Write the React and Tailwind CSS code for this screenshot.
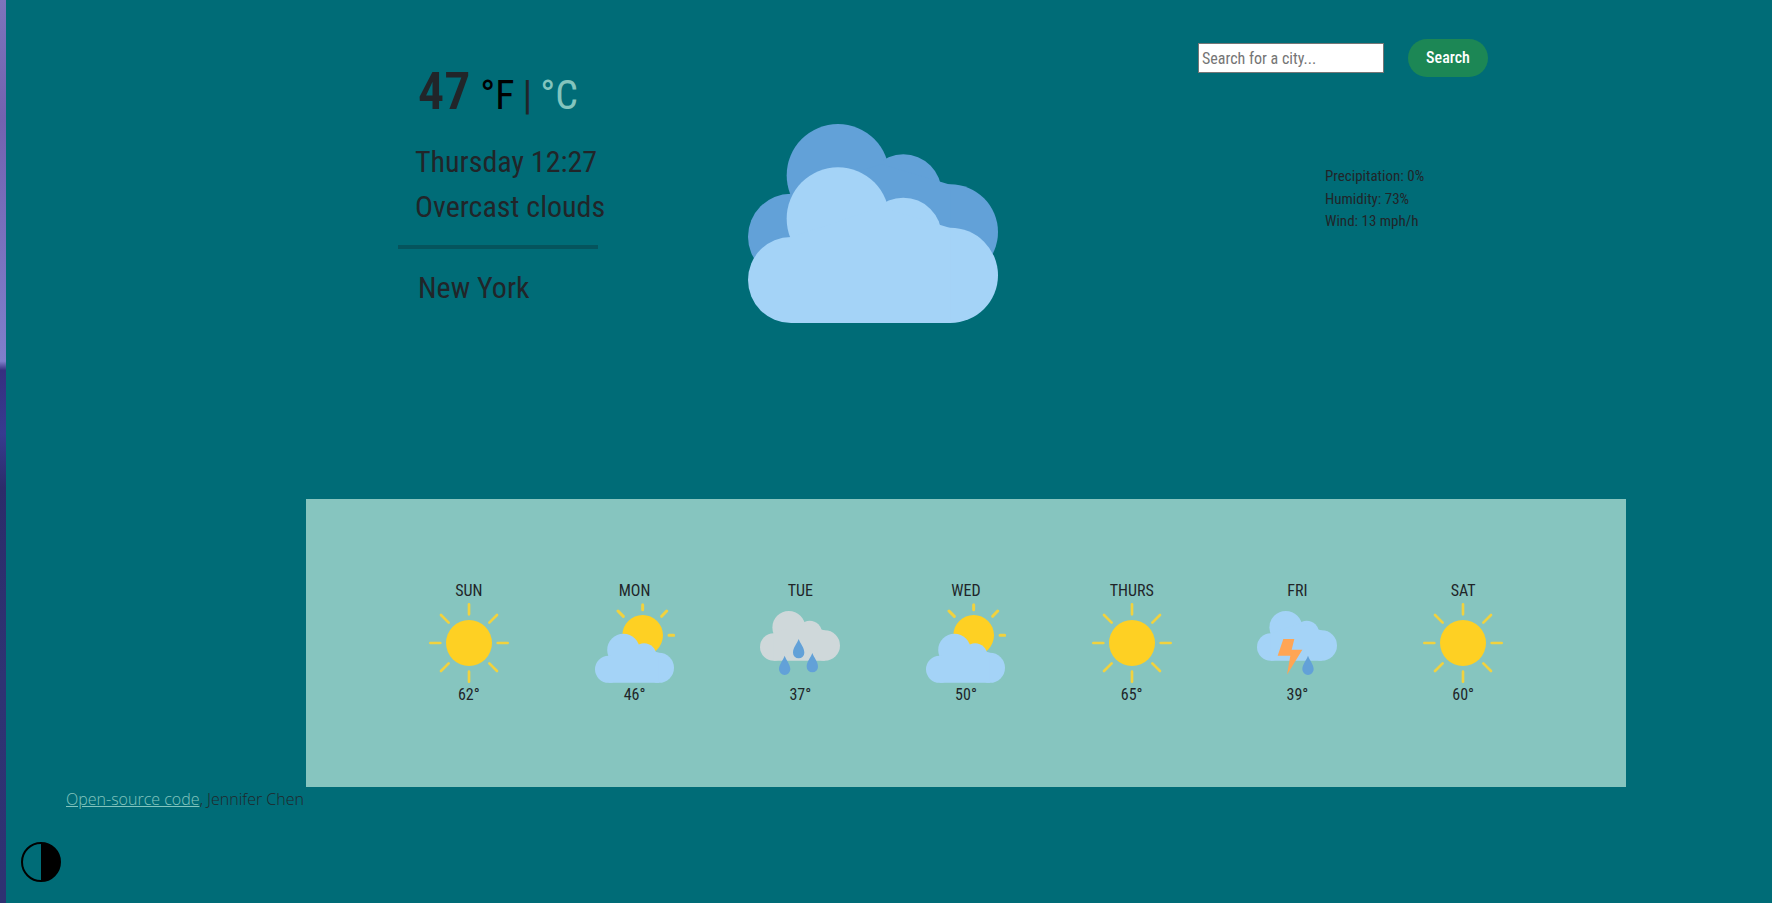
const CLOUD = (
  <>
    <circle cx="129" cy="338" r="129" />
    <circle cx="270" cy="154" r="154" />
    <circle cx="466" cy="206" r="115" />
    <circle cx="607" cy="324" r="143" />
    <path d="M129 467V209L400 120L607 182V467Z" />
  </>
);

const RAIN_DROP = "M0 0C5 14 17 26 17 41A17 17 0 0 1 -17 41C-17 26 -5 14 0 0Z";

function Overcast() {
  return (
    <svg viewBox="0 0 750 597" className="w-[250px]" role="img" aria-label="Overcast clouds">
      <g fill="#62a1d8">{CLOUD}</g>
      <g fill="#a4d3f7" transform="translate(0 130)">{CLOUD}</g>
    </svg>
  );
}

function Sunny() {
  return (
    <svg viewBox="0 0 240 240" className="size-20" aria-hidden="true">
      <circle cx="120" cy="120" r="69" fill="#fed023" />
      <path
        d="M120 4V34M120 206V236M4 120H34M206 120H236M36 36L59 59M181 181L204 204M36 204L59 181M181 59L204 36"
        stroke="#f1d23f"
        strokeWidth="8"
        strokeLinecap="round"
      />
    </svg>
  );
}

function PartlySunny() {
  return (
    <svg viewBox="0 0 240 240" className="size-20" aria-hidden="true">
      <circle cx="143" cy="97" r="61" fill="#fed023" />
      <path
        d="M143 5V20M69 24L85 40M200 40L215 24M222 97H236"
        stroke="#f1d23f"
        strokeWidth="9"
        strokeLinecap="round"
      />
      <g fill="#a4d3f7" transform="translate(0 92) scale(0.316)">{CLOUD}</g>
    </svg>
  );
}

function Rain() {
  return (
    <svg viewBox="0 0 240 240" className="size-20" aria-hidden="true">
      <g fill="#cfd8da" transform="translate(0 24) scale(0.32)">{CLOUD}</g>
      <g fill="#62a1d8">
        <path d={RAIN_DROP} transform="translate(74 158)" />
        <path d={RAIN_DROP} transform="translate(116 108)" />
        <path d={RAIN_DROP} transform="translate(157 150)" />
      </g>
    </svg>
  );
}

function Thunder() {
  return (
    <svg viewBox="0 0 240 240" className="size-20" aria-hidden="true">
      <g fill="#a4d3f7" transform="translate(0 24) scale(0.32)">{CLOUD}</g>
      <path d="M79 108H112L104 140H136L90 215L100 158H62Z" fill="#ffa554" />
      <path d={RAIN_DROP} transform="translate(153 158)" fill="#62a1d8" />
    </svg>
  );
}

const FORECAST = [
  { day: "SUN", Icon: Sunny, temp: 62 },
  { day: "MON", Icon: PartlySunny, temp: 46 },
  { day: "TUE", Icon: Rain, temp: 37 },
  { day: "WED", Icon: PartlySunny, temp: 50 },
  { day: "THURS", Icon: Sunny, temp: 65 },
  { day: "FRI", Icon: Thunder, temp: 39 },
  { day: "SAT", Icon: Sunny, temp: 60 },
];

export default function App() {
  return (
    <div className="flex min-h-screen bg-[#006c77] font-['Roboto_Condensed','Liberation_Sans_Narrow',sans-serif] text-base text-[#212529]">
      <div className="w-1.5 shrink-0 bg-[linear-gradient(#7d74bb_0%,#7362b0_13%,#7f7fcb_40%,#362f80_41%,#373b90_48%,#2c2c6a_54%,#2f3373_75%,#2f3272_100%)]" />
      <main className="min-w-0 flex-1">
        <div className="pl-[154px]">
          <div className="mx-auto max-w-[1320px]">
            <div className="grid min-h-[499px] grid-cols-[350px_450px_1fr] pl-[92px]">
              <section className="pt-[60px]">
                <h1 className="flex items-baseline pl-5 text-[40px] leading-[64px]">
                  <strong className="mr-2.5 text-[52px] font-semibold">47</strong>
                  <a href="#f" className="text-black">°F</a>
                  <span className="mx-2">|</span>
                  <a href="#c" className="text-[#83c5be]">°C</a>
                </h1>
                <ul className="mt-[11px] pl-[17px] text-[30px] leading-[45px]">
                  <li>Thursday 12:27</li>
                  <li>Overcast clouds</li>
                </ul>
                <hr className="mt-4 w-[200px] border-0 border-t-4 border-[#05545d]" />
                <h2 className="mt-4 pl-5 text-[30px] leading-[45px]">New York</h2>
              </section>
              <div className="pt-[124px]">
                <Overcast />
              </div>
              <section className="pt-[39px]">
                <form className="flex items-center gap-6" onSubmit={(e) => e.preventDefault()}>
                  <input
                    type="text"
                    aria-label="City"
                    placeholder="Search for a city..."
                    className="h-[30px] w-[186px] border border-[#767676] bg-white px-[3px] placeholder:text-[#757575]"
                  />
                  <button type="submit" className="h-[38px] w-20 rounded-full bg-[#1c8755] font-medium text-white">
                    Search
                  </button>
                </form>
                <ul className="mt-[88px] pl-[127px] text-[15px] leading-normal">
                  <li>Precipitation: 0%</li>
                  <li>Humidity: 73%</li>
                  <li>Wind: 13 mph/h</li>
                </ul>
              </section>
            </div>
            <section className="grid grid-cols-7 bg-[#86c5bf] p-20 text-center">
              {FORECAST.map(({ day, Icon, temp }) => (
                <div key={day} className="flex flex-col items-center">
                  <p>{day}</p>
                  <Icon />
                  <p>{temp}°</p>
                </div>
              ))}
            </section>
          </div>
        </div>
        <footer className="font-['Open_Sans',sans-serif] font-light">
          <p className="pl-[60px]">
            <a href="#source" className="text-[#83c5be] underline">Open-source code</a>, Jennifer Chen
          </p>
          <button type="button" aria-label="Toggle theme" className="mt-[31px] ml-[15px] block">
            <svg viewBox="0 0 40 40" className="size-10">
              <circle cx="20" cy="20" r="19" fill="none" stroke="#000" strokeWidth="2" />
              <path d="M20 1a19 19 0 0 1 0 38Z" />
            </svg>
          </button>
        </footer>
      </main>
    </div>
  );
}
